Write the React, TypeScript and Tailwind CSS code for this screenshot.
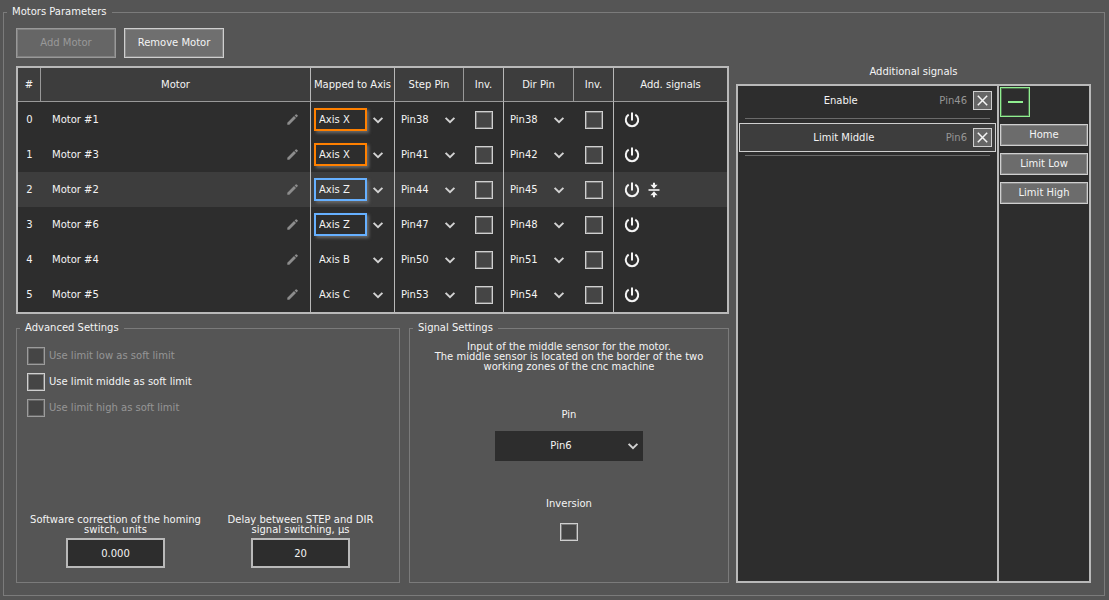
import type { ReactNode } from "react";

type Motor = {
  name: string;
  axis: string;
  group?: "orange" | "blue";
  step: string;
  dir: string;
  middle?: boolean;
};

const motors: Motor[] = [
  { name: "Motor #1", axis: "Axis X", group: "orange", step: "Pin38", dir: "Pin38" },
  { name: "Motor #3", axis: "Axis X", group: "orange", step: "Pin41", dir: "Pin42" },
  { name: "Motor #2", axis: "Axis Z", group: "blue", step: "Pin44", dir: "Pin45", middle: true },
  { name: "Motor #6", axis: "Axis Z", group: "blue", step: "Pin47", dir: "Pin48" },
  { name: "Motor #4", axis: "Axis B", step: "Pin50", dir: "Pin51" },
  { name: "Motor #5", axis: "Axis C", step: "Pin53", dir: "Pin54" },
];

const signals = [
  { name: "Enable", pin: "Pin46" },
  { name: "Limit Middle", pin: "Pin6" },
];

const selectedMotor = 2;
const selectedSignal = 1;

const axisFrame = {
  orange: "border-[#ff8000] shadow-[2px_2px_3px_#6a6a6a]",
  blue: "border-[#66b0ff] shadow-[2px_2px_3px_#6a6a6a]",
  none: "border-transparent",
};

function Chevron() {
  return (
    <svg viewBox="0 0 12 12" className="pointer-events-none size-3 shrink-0" aria-hidden="true">
      <path d="M1.6 3.9 6 8.1l4.4-4.2" fill="none" stroke="#d2d2d2" strokeWidth="2" />
    </svg>
  );
}

function PencilIcon() {
  return (
    <svg viewBox="0 0 11 11" className="size-[11px]" aria-hidden="true">
      <path
        fill="#8c8c8c"
        d="M.3 8.7 7 2l2 2-6.7 6.7H.3zM7.6 1.4 8.7.4a.7.7 0 0 1 1 0l.9.9a.7.7 0 0 1 0 1L9.6 3.4z"
      />
    </svg>
  );
}

function PowerIcon() {
  return (
    <svg viewBox="0 0 16 16" className="size-4" role="img" aria-label="Enable">
      <path
        d="M8 .4v8M4.7 2.7a6.2 6.2 0 1 0 6.6 0"
        fill="none"
        stroke="#f4f4f4"
        strokeWidth="2"
      />
    </svg>
  );
}

function MiddleIcon() {
  return (
    <svg viewBox="0 0 12 16" className="h-4 w-3" role="img" aria-label="Limit Middle">
      <path d="M.5 7.2h11v1.6H.5z" fill="#f4f4f4" />
      <path d="M5 .8h2v2h2.6L6 6.8 2.4 2.8H5zM5 15.2h2v-2h2.6L6 9.2l-3.6 4H5z" fill="#f4f4f4" />
    </svg>
  );
}

function CheckBox({ id, label, disabled }: { id?: string; label?: string; disabled?: boolean }) {
  return (
    <input
      type="checkbox"
      id={id}
      aria-label={label}
      disabled={disabled}
      className="block size-[18px] shrink-0 appearance-none border border-[#cfcfcf] bg-[#454545] shadow-[inset_0_0_0_1px_#7a7a7a] checked:bg-[#b0b0b0] disabled:border-[#9c9c9c] disabled:shadow-[inset_0_0_0_1px_#666666]"
    />
  );
}

function Group({ title, className, children }: { title: string; className?: string; children: ReactNode }) {
  return (
    <fieldset className={`flex min-w-0 flex-col border border-[#7b7b7b] px-[3px] ${className ?? ""}`}>
      <legend className="px-[5px] leading-[14px]">{title}</legend>
      {children}
    </fieldset>
  );
}

function PinSelect({ value, label }: { value: string; label: string }) {
  return (
    <div className="flex items-center gap-1 pl-[6px]">
      <select aria-label={label} defaultValue={value} className="h-[23px] w-[39px] appearance-none bg-transparent">
        <option>{value}</option>
      </select>
      <Chevron />
    </div>
  );
}

function MotorTable() {
  const head = "h-[34px] border-b border-[#999999] bg-[#3d3d3d] p-0 text-center font-normal";
  return (
    <div className="mt-2 mb-[7px] border-2 border-[#b9b9b9]">
      <table className="w-full table-fixed border-separate border-spacing-0 bg-[#2d2d2d]">
        <colgroup>
          <col className="w-[23px]" />
          <col />
          <col className="w-[84px]" />
          <col className="w-[69px]" />
          <col className="w-[40px]" />
          <col className="w-[70px]" />
          <col className="w-[40px]" />
          <col className="w-[113px]" />
        </colgroup>
        <thead>
          <tr>
            <th className={`${head} border-r`}>#</th>
            <th className={`${head} border-r border-r-[#b8b8b8]`}>Motor</th>
            <th className={`${head} border-r border-r-[#b8b8b8] whitespace-nowrap`}>Mapped to Axis</th>
            <th className={`${head} border-r`}>Step Pin</th>
            <th className={`${head} border-r border-r-[#b8b8b8]`}>Inv.</th>
            <th className={`${head} border-r`}>Dir Pin</th>
            <th className={`${head} border-r border-r-[#b8b8b8]`}>Inv.</th>
            <th className={head}>Add. signals</th>
          </tr>
        </thead>
        <tbody>
          {motors.map((m, i) => (
            <tr key={m.name} className={i === selectedMotor ? "bg-[#3d3d3d]" : ""}>
              <td className="h-[35px] p-0 text-center">{i}</td>
              <td className="border-r border-[#b8b8b8] p-0">
                <div className="flex items-center justify-between pr-3 pl-[11px]">
                  <span>{m.name}</span>
                  <button type="button" aria-label={`Rename ${m.name}`}>
                    <PencilIcon />
                  </button>
                </div>
              </td>
              <td className="border-r border-[#b8b8b8] p-0">
                <div className="flex items-center gap-[5px] pl-[3px]">
                  <select
                    aria-label={`${m.name} axis`}
                    defaultValue={m.axis}
                    className={`h-[23px] w-[53px] appearance-none border-2 bg-inherit pl-[3px] ${axisFrame[m.group ?? "none"]}`}
                  >
                    <option>{m.axis}</option>
                  </select>
                  <Chevron />
                </div>
              </td>
              <td className="p-0">
                <PinSelect value={m.step} label={`${m.name} step pin`} />
              </td>
              <td className="border-r border-[#b8b8b8] p-0">
                <div className="flex justify-center">
                  <CheckBox label={`${m.name} step inversion`} />
                </div>
              </td>
              <td className="p-0">
                <PinSelect value={m.dir} label={`${m.name} dir pin`} />
              </td>
              <td className="border-r border-[#b8b8b8] p-0">
                <div className="flex justify-center">
                  <CheckBox label={`${m.name} dir inversion`} />
                </div>
              </td>
              <td className="p-0">
                <div className="flex items-center gap-2 pl-[10px]">
                  <PowerIcon />
                  {m.middle && <MiddleIcon />}
                </div>
              </td>
            </tr>
          ))}
        </tbody>
      </table>
    </div>
  );
}

function AdvancedSettings() {
  const limits = [
    { id: "low", label: "Use limit low as soft limit", disabled: true },
    { id: "middle", label: "Use limit middle as soft limit", disabled: false },
    { id: "high", label: "Use limit high as soft limit", disabled: true },
  ];
  return (
    <Group title="Advanced Settings">
      <div className="flex flex-col gap-2 px-[7px] pt-3">
        {limits.map((l) => (
          <div key={l.id} className="flex items-center gap-1">
            <CheckBox id={l.id} disabled={l.disabled} />
            <label htmlFor={l.id} className={l.disabled ? "text-[#969696]" : ""}>
              {l.label}
            </label>
          </div>
        ))}
      </div>
      <div className="mt-auto grid grid-cols-2 px-[3px] pb-[14px] text-center leading-[10px]">
        <label className="flex flex-col items-center gap-[3px]">
          <span>
            Software correction of the homing
            <br />
            switch, units
          </span>
          <input type="text" defaultValue="0.000" className="h-[30px] w-[99px] border-2 border-[#b9b9b9] bg-[#2d2d2d] text-center" />
        </label>
        <label className="flex flex-col items-center gap-[3px]">
          <span>
            Delay between STEP and DIR
            <br />
            signal switching, µs
          </span>
          <input type="text" defaultValue="20" className="h-[30px] w-[99px] border-2 border-[#b9b9b9] bg-[#2d2d2d] text-center" />
        </label>
      </div>
    </Group>
  );
}

function SignalSettings() {
  return (
    <Group title="Signal Settings">
      <div className="flex flex-col items-center pt-[7px]">
        <p className="text-center leading-[10px]">
          Input of the middle sensor for the motor.
          <br />
          The middle sensor is located on the border of the two
          <br />
          working zones of the cnc machine
        </p>
        <label htmlFor="signal-pin" className="mt-9">
          Pin
        </label>
        <div className="mt-[9px] flex h-[30px] w-[148px] items-center bg-[#2d2d2d] pr-1">
          <select id="signal-pin" defaultValue="Pin6" className="h-full min-w-0 grow appearance-none bg-transparent text-center">
            <option>Pin6</option>
          </select>
          <Chevron />
        </div>
        <label htmlFor="signal-inversion" className="mt-9">
          Inversion
        </label>
        <div className="mt-3">
          <CheckBox id="signal-inversion" />
        </div>
      </div>
    </Group>
  );
}

function AdditionalSignals() {
  return (
    <section className="flex flex-col">
      <h2 className="pt-[46px] pb-[5px] text-center">Additional signals</h2>
      <div className="flex grow border-2 border-[#b9b9b9] bg-[#2d2d2d]">
        <ul className="grow px-px">
          {signals.map((s, i) => (
            <li key={s.name}>
              <div
                className={`flex h-[29px] items-center border pr-[3px] pl-[2px] ${
                  i === selectedSignal ? "border-[#cfcfcf] bg-[#3d3d3d]" : "border-transparent"
                }`}
              >
                <span className="grow text-center">{s.name}</span>
                <span className="text-[#969696]">{s.pin}</span>
                <button
                  type="button"
                  aria-label={`Remove ${s.name}`}
                  className="ml-[6px] flex size-[19px] items-center justify-center border border-[#cfcfcf] bg-[#666666]"
                >
                  <svg viewBox="0 0 11 11" className="size-[11px]" aria-hidden="true">
                    <path d="m.8.8 9.4 9.4M10.2.8.8 10.2" stroke="#f4f4f4" strokeWidth="1.5" />
                  </svg>
                </button>
              </div>
              <hr className="mx-[6px] mt-[3px] mb-1 border-[#6a6a6a]" />
            </li>
          ))}
        </ul>
        <div className="flex w-[92px] flex-col gap-[7px] border-l-2 border-[#b9b9b9] p-px">
          <button
            type="button"
            aria-label="Collapse signals"
            className="flex size-[30px] items-center justify-center border border-[#90ee90] shadow-[inset_0_0_0_1px_#4c6e4c]"
          >
            <span className="h-[2px] w-[15px] bg-[#90ee90]" />
          </button>
          {["Home", "Limit Low", "Limit High"].map((t) => (
            <button
              key={t}
              type="button"
              className="h-[22px] border border-[#cfcfcf] bg-[#6c6c6c] shadow-[inset_0_0_0_1px_#8a8a8a]"
            >
              {t}
            </button>
          ))}
        </div>
      </div>
    </section>
  );
}

export default function App() {
  const button =
    "h-[30px] w-[100px] border border-[#cfcfcf] bg-[#6f6f6f] shadow-[inset_0_0_0_1px_#8a8a8a] disabled:border-[#999999] disabled:bg-[#666666] disabled:text-[#999999] disabled:shadow-[inset_0_0_0_1px_#808080]";
  return (
    <main className="flex min-h-screen bg-[#555555] pt-[5px] pr-1 pb-1 pl-[3px] font-['DejaVu_Sans',Verdana,sans-serif] text-[10px] leading-[14px] text-[#f4f4f4]">
      <Group title="Motors Parameters" className="grow">
        <div className="grid grow grid-cols-[minmax(0,1fr)_355px] gap-[7px] pr-[10px] pb-3 pl-[9px]">
          <div className="flex flex-col pt-[9px]">
            <div className="flex gap-2">
              <button type="button" disabled className={button}>
                Add Motor
              </button>
              <button type="button" className={button}>
                Remove Motor
              </button>
            </div>
            <MotorTable />
            <div className="grid grow grid-cols-[6fr_5fr] gap-[9px]">
              <AdvancedSettings />
              <SignalSettings />
            </div>
          </div>
          <AdditionalSignals />
        </div>
      </Group>
    </main>
  );
}
